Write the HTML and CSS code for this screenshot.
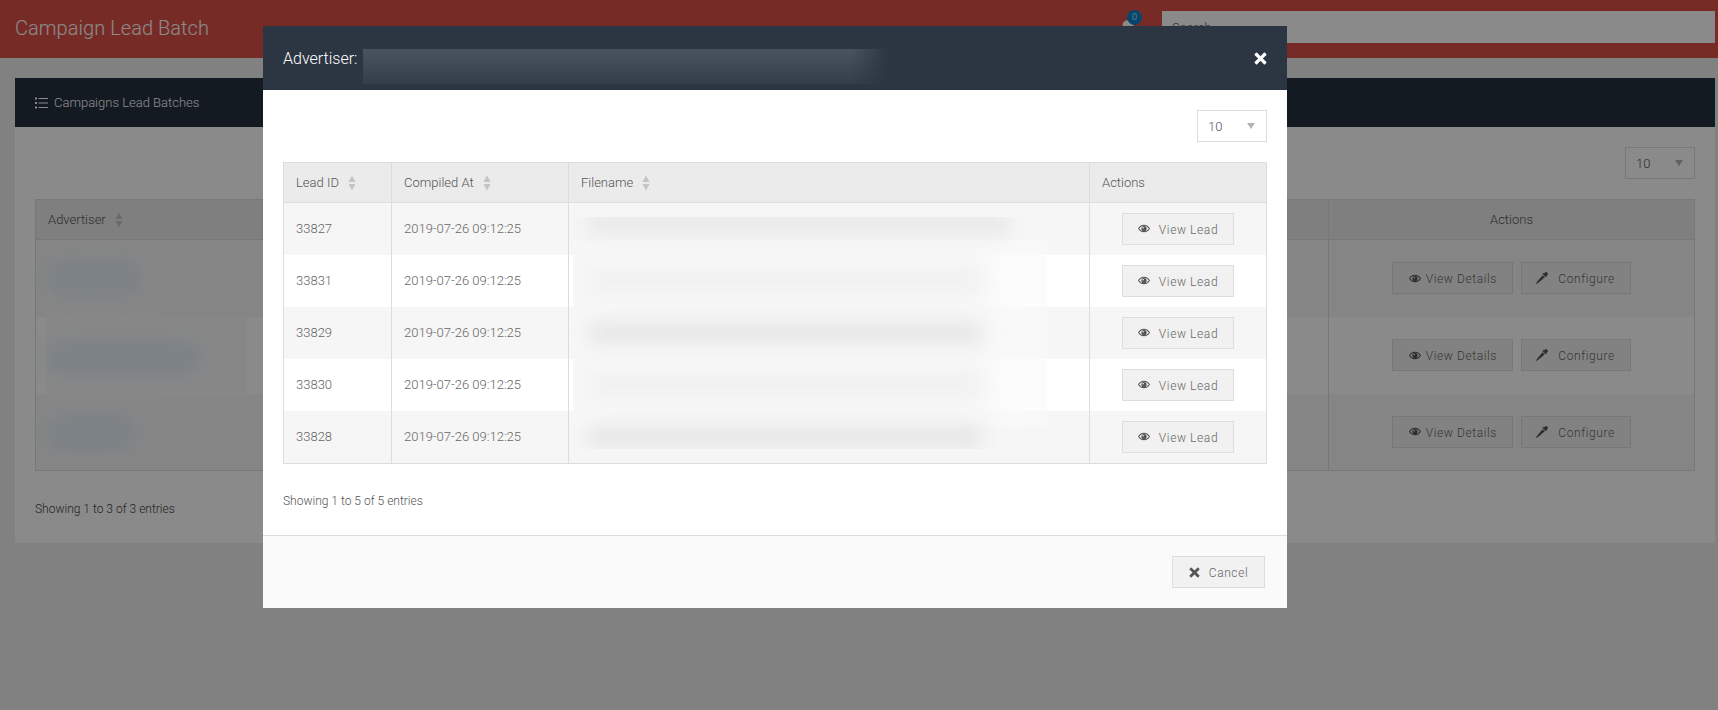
FILE: index.html
```html
<!DOCTYPE html>
<html lang="en">
<head>
<meta charset="utf-8">
<title>Campaign Lead Batch</title>
<link rel="stylesheet" href="styles.css">
</head>
<body>
<svg class="sprites" width="0" height="0" aria-hidden="true">
  <symbol id="i-eye" viewBox="0 0 16 12"><path fill-rule="evenodd" d="M8 1C4.500 1 1.600 3 0 6c1.600 3 4.500 5 8 5s6.400-2 8-5c-1.600-3-4.500-5-8-5zM8 2.300c-2.800 0-5 1.600-6.500 3.700C3 8.100 5.200 9.700 8 9.700s5-1.600 6.500-3.700C13 3.900 10.800 2.300 8 2.300zM8 2.500a3.500 3.500 0 1 1 0 7 3.500 3.500 0 0 1 0-7zM6.900 3.900a1.100 1.100 0 1 0 0 2.200 1.100 1.100 0 0 0 0-2.200z"/></symbol>
  <symbol id="i-wand" viewBox="0 0 14 14"><path d="M9.300 1.700 11 .2a1 1 0 0 1 1.400 0l1.300 1.400a1 1 0 0 1 0 1.400l-1.500 1.600.4.600-1 1-.9-.7L7.400 2.100l1-.9zM7.800 3.800l2.400 2.400-5.300 4.700L.8 13.900l-.7-.7 3-4.100z"/></symbol>
  <symbol id="i-x" viewBox="0 0 14 14"><path d="M3.400.9 7 4.500 10.600.9a.9.9 0 0 1 1.300 0l1.200 1.200a.9.9 0 0 1 0 1.300L9.500 7l3.600 3.600a.9.9 0 0 1 0 1.300l-1.200 1.200a.9.9 0 0 1-1.300 0L7 9.500l-3.600 3.600a.9.9 0 0 1-1.300 0L.9 11.900a.9.9 0 0 1 0-1.300L4.500 7 .9 3.400a.9.9 0 0 1 0-1.300L2.100.9a.9.9 0 0 1 1.300 0z"/></symbol>
  <symbol id="i-list" viewBox="0 0 13 12"><path d="M0 .5h2v2H0zM0 5h2v2H0zM0 9.500h2v2H0zM3.500 1h9.500v1.100H3.500zM3.500 5.500h9.500v1.100H3.500zM3.500 10h9.500v1.100H3.500z"/></symbol>
  <symbol id="i-sort" viewBox="0 0 8 16"><path d="M4 .5 7.500 7H.5z"/><path d="M.5 9h7L4 15.500z"/></symbol>
</svg>

<header class="topbar">
  <h1 class="page-title">Campaign Lead Batch</h1>
  <div class="top-tools">
    <div class="bell">
      <svg class="bell-icon" viewBox="0 0 16 18"><path d="M8 1a5.500 5.500 0 0 0-5.500 5.500c0 4-1.500 5.500-2 6.500h15c-.5-1-2-2.500-2-6.500A5.500 5.500 0 0 0 8 1zM6 14.500a2 2 0 0 0 4 0z"/></svg>
      <span class="badge">0</span>
    </div>
    <input class="search" type="text" placeholder="Search">
  </div>
</header>

<main class="content">
  <section class="panel">
    <div class="panel-head">
      <svg class="icon list-icon"><use href="#i-list"/></svg>
      <span>Campaigns Lead Batches</span>
    </div>
    <div class="panel-body">
      <div class="length-row"><div class="select"><span>10</span><i class="caret"></i></div></div>
      <div class="table-wrap">
        <table class="table outer">
          <thead>
            <tr>
              <th class="sortable">Advertiser <svg class="sort"><use href="#i-sort"/></svg></th>
              <th class="col-actions center">Actions</th>
            </tr>
          </thead>
          <tbody>
            <tr>
              <td></td>
              <td class="center">
                <a class="btn btn-details"><svg class="icon eye"><use href="#i-eye"/></svg>View Details</a>
                <a class="btn btn-config"><svg class="icon wand"><use href="#i-wand"/></svg>Configure</a>
              </td>
            </tr>
            <tr>
              <td></td>
              <td class="center">
                <a class="btn btn-details"><svg class="icon eye"><use href="#i-eye"/></svg>View Details</a>
                <a class="btn btn-config"><svg class="icon wand"><use href="#i-wand"/></svg>Configure</a>
              </td>
            </tr>
            <tr>
              <td></td>
              <td class="center">
                <a class="btn btn-details"><svg class="icon eye"><use href="#i-eye"/></svg>View Details</a>
                <a class="btn btn-config"><svg class="icon wand"><use href="#i-wand"/></svg>Configure</a>
              </td>
            </tr>
          </tbody>
        </table>
        <div class="smudge-box">
          <i class="patch p1"></i><i class="patch p2"></i><i class="patch p3"></i>
          <i class="smudge s1"></i><i class="smudge s2"></i><i class="smudge s3"></i>
        </div>
      </div>
      <p class="info">Showing 1 to 3 of 3 entries</p>
    </div>
  </section>
</main>

<div class="backdrop"></div>

<div class="modal">
  <div class="modal-head">
    <h2 class="modal-title">Advertiser: <span class="title-redact"></span></h2>
    <svg class="close"><use href="#i-x"/></svg>
  </div>
  <div class="modal-body">
    <div class="length-row"><div class="select"><span>10</span><i class="caret"></i></div></div>
    <div class="table-wrap">
      <table class="table inner">
        <thead>
          <tr>
            <th class="c-id sortable">Lead ID <svg class="sort"><use href="#i-sort"/></svg></th>
            <th class="c-date sortable">Compiled At <svg class="sort"><use href="#i-sort"/></svg></th>
            <th class="sortable">Filename <svg class="sort"><use href="#i-sort"/></svg></th>
            <th class="c-act">Actions</th>
          </tr>
        </thead>
        <tbody>
          <tr><td>33827</td><td>2019-07-26 09:12:25</td><td></td><td class="center"><a class="btn btn-lead"><svg class="icon eye"><use href="#i-eye"/></svg>View Lead</a></td></tr>
          <tr><td>33831</td><td>2019-07-26 09:12:25</td><td></td><td class="center"><a class="btn btn-lead"><svg class="icon eye"><use href="#i-eye"/></svg>View Lead</a></td></tr>
          <tr><td>33829</td><td>2019-07-26 09:12:25</td><td></td><td class="center"><a class="btn btn-lead"><svg class="icon eye"><use href="#i-eye"/></svg>View Lead</a></td></tr>
          <tr><td>33830</td><td>2019-07-26 09:12:25</td><td></td><td class="center"><a class="btn btn-lead"><svg class="icon eye"><use href="#i-eye"/></svg>View Lead</a></td></tr>
          <tr><td>33828</td><td>2019-07-26 09:12:25</td><td></td><td class="center"><a class="btn btn-lead"><svg class="icon eye"><use href="#i-eye"/></svg>View Lead</a></td></tr>
        </tbody>
      </table>
      <div class="file-redact">
        <i class="block b-top"></i><i class="block b-mid"></i><i class="block b-end"></i>
        <i class="line l1"></i><i class="line l2"></i><i class="line l3"></i><i class="line l4"></i><i class="line l5"></i>
      </div>
    </div>
    <p class="info modal-info">Showing 1 to 5 of 5 entries</p>
  </div>
  <div class="modal-foot">
    <a class="btn btn-cancel"><svg class="icon x"><use href="#i-x"/></svg>Cancel</a>
  </div>
</div>
</body>
</html>
```
FILE: styles.css
```css
* { box-sizing: border-box; }
html, body { margin: 0; height: 100%; }
body {
  background: #eeeeee;
  color: #666;
  font-family: Roboto, "Liberation Sans", sans-serif;
  font-size: 13px;
  font-weight: 300;
  overflow: hidden;
}
.sprites { position: absolute; }
.icon { fill: #555; flex: none; }

.topbar {
  height: 58px;
  background: #dc5148;
  padding: 11px 3px 0 15px;
  display: flex;
  justify-content: space-between;
}
.page-title { margin: 0; font-size: 20px; font-weight: 300; line-height: 34px; color: #fff; letter-spacing: .05px; }
.top-tools { display: flex; gap: 26px; }
.bell { position: relative; width: 16px; height: 32px; }
.bell-icon { position: absolute; left: 0; top: 8px; width: 16px; height: 18px; fill: #fff; }
.badge {
  position: absolute; left: 7px; top: -1px; width: 15px; height: 15px; border-radius: 50%;
  background: #0a82c8; color: #fff; font-size: 9px; line-height: 15px; text-align: center;
}
.search {
  width: 553px; height: 32px; border: 0; background: #fff; padding: 0 10px;
  font: 300 13px Roboto, sans-serif;
}
.search::placeholder { color: #666; }

.content { padding: 20px 3px 0 15px; }
.panel { background: #fff; height: 465px; }
.panel-head {
  height: 49px; background: #23303f; color: #fff; display: flex; align-items: center;
  gap: 6px; padding-left: 20px; font-size: 13px;
}
.panel-head .icon { fill: #fff; }
.list-icon { width: 13px; height: 12px; }
.panel-body { padding: 20px 20px 0 20px; }
.length-row { display: flex; justify-content: flex-end; margin-bottom: 20px; }
.select {
  width: 70px; height: 32px; border: 1px solid #ddd; display: flex; align-items: center;
  justify-content: space-between; padding: 0 11px 0 10px; font-size: 13px; color: #555;
}
.caret { width: 0; height: 0; border-left: 4px solid transparent; border-right: 4px solid transparent; border-top: 6px solid #b5b5b5; }

.table-wrap { position: relative; }
.table { width: 100%; border-collapse: collapse; table-layout: fixed; border: 1px solid #ddd; }
.table th, .table td { border-left: 1px solid #ddd; border-right: 1px solid #ddd; padding: 0 12px; text-align: left; font-weight: 300; vertical-align: middle; }
.table th { background: #ebebeb; height: 40px; border-bottom: 1px solid #ddd; color: #555; }
.table th.sortable { padding-top: 2px; }
.table .center { text-align: center; }
.table tbody tr:nth-child(odd) td { background: #f6f6f6; }
.table tbody tr:nth-child(even) td { background: #fff; }
.sort { width: 8px; height: 16px; margin-left: 6px; vertical-align: middle; position: relative; top: -1px; fill: #c4c4c4; }

.outer tbody tr { height: 77px; }
.col-actions { width: 366px; }
.btn {
  display: inline-flex; align-items: center; justify-content: center; height: 32px;
  padding-top: 2px; vertical-align: middle;
  border: 1px solid #ddd; background: #f1f1f1; color: #666; font-size: 12px; letter-spacing: .6px;
}
.btn .icon { margin-top: -2px; }
.btn-details { width: 121px; gap: 5px; }
.btn-config { width: 110px; gap: 10px; margin-left: 4px; }
.btn-lead { width: 112px; gap: 9px; }
.btn-cancel { width: 93px; gap: 9px; }
.eye { width: 12px; height: 9px; }
.wand { width: 12px; height: 12px; }
.x { width: 11px; height: 11px; }

.smudge-box { position: absolute; left: 11px; top: 53px; width: 201px; height: 211px; }
.patch { position: absolute; display: block; left: 0; background: #f7f7f7; }
.p1 { top: 0; width: 118px; height: 65px; }
.p2 { top: 65px; width: 201px; height: 81px; background: #fafafa; }
.p3 { top: 146px; width: 113px; height: 65px; }
.smudge { position: absolute; display: block; left: 0; border-radius: 20px; background: #e4f0f8; filter: blur(9px); }
.s1 { top: 9px; width: 95px; height: 34px; }
.s2 { top: 89px; width: 155px; height: 34px; }
.s3 { top: 164px; width: 90px; height: 34px; }

.info { margin: 0; }
.panel .info { margin-top: 31px; font-size: 12px; color: #444; }

.backdrop { position: fixed; inset: 0; background: rgba(0,0,0,.46); }

.modal {
  position: fixed; left: 263px; top: 26px; width: 1024px; height: 582px;
  background: #fff; display: flex; flex-direction: column;
}
.modal-head {
  height: 64px; background: #2c3643; color: #fff; display: flex; align-items: center;
  justify-content: space-between; padding: 0 20px; flex: none; position: relative;
}
.modal-title { margin: 0; font-size: 16px; font-weight: 300; }
.title-redact {
  position: absolute; left: 100px; top: 23px; width: 525px; height: 35px;
  background:
    linear-gradient(to right, transparent 93%, #2c3643),
    linear-gradient(#4a545f, #343e4a);
}
.close { width: 13px; height: 13px; fill: #fff; }
.modal-body { flex: 1; padding: 20px 20px 0; }
.inner .c-id { width: 108px; }
.inner .c-date { width: 177px; }
.inner .c-act { width: 177px; }
.inner tbody tr { height: 52px; }
.inner tbody tr:last-child { height: 53px; }

.file-redact { position: absolute; left: 290px; top: 55px; width: 474px; height: 232px; overflow: hidden; }
.block { position: absolute; display: block; left: 0; }
.b-top { top: 0; width: 442px; height: 23px; background: #f5f5f5; }
.b-mid { top: 23px; width: 474px; height: 187px; background: linear-gradient(to right, #f7f7f7 84%, rgba(251,251,251,.6) 93%, rgba(250,250,250,.6)); }
.b-end { top: 210px; width: 428px; height: 22px; background: #f6f6f6; }
.line { position: absolute; display: block; left: 16px; width: 392px; height: 20px; background: #eeeeee; filter: blur(9px); }
.l1 { top: -4px; width: 420px; background: #e8e8e8; }
.l2 { top: 54px; background: #f0f0f0; }
.l3 { top: 106px; background: #e5e5e5; }
.l4 { top: 158px; background: #f0f0f0; }
.l5 { top: 210px; background: #e5e5e5; }

.modal-info { margin-top: 30px; font-size: 12px; color: #555; }
.modal-foot {
  height: 73px; flex: none; background: #fafafa; border-top: 1px solid #ddd;
  display: flex; align-items: center; justify-content: flex-end; padding: 0 22px 0 0;
}
```
